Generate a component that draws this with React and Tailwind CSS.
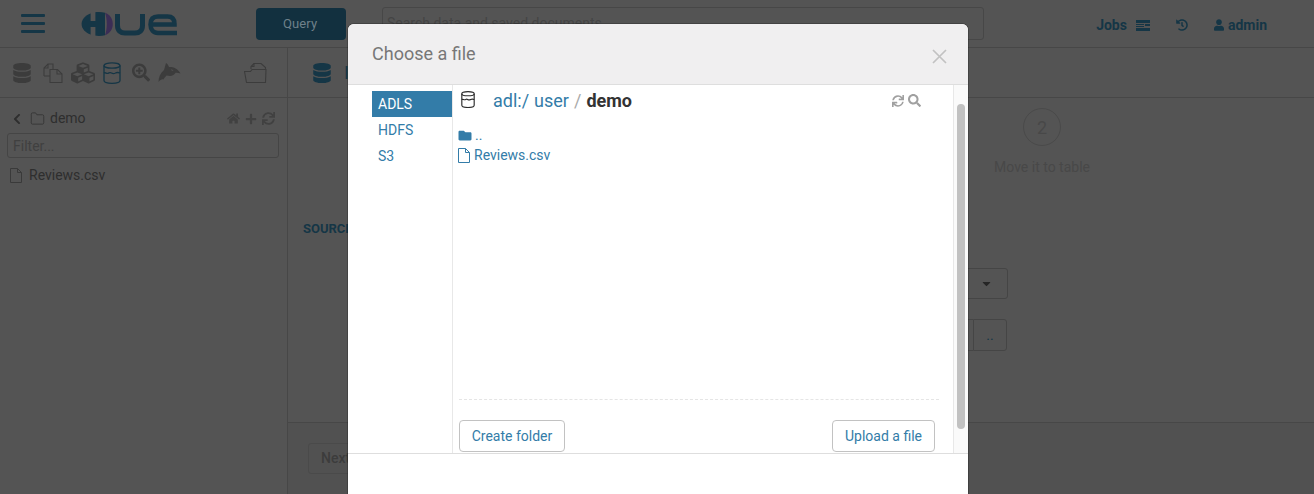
import React from "react";
import { FaChevronLeft, FaHome, FaPlus, FaSync, FaSearch, FaFolder, FaUser, FaHistory, FaCaretDown, FaDatabase, FaCubes, FaSearchPlus } from "react-icons/fa";
import { FiFolder } from "react-icons/fi";

const font = { fontFamily: "Roboto, sans-serif" };

function Bucket({ color, w = 18, h = 22, sw = 1.3 }) {
  return (
    <svg width={w} height={h} viewBox="0 0 18 22" fill="none" stroke={color} strokeWidth={sw}>
      <ellipse cx="9" cy="3.500" rx="8" ry="2.700" />
      <path d="M1 3.500v15c0 1.600 3.600 2.800 8 2.800s8-1.200 8-2.800v-15" />
      <path d="M1 11c1.500-1 2.500 .8 4 .3s2-1.300 3.500-.3 2.500 .8 4 0 3-.6 4.500 0" />
    </svg>
  );
}

function FileO({ color, className = "" }) {
  return (
    <svg className={className} width="12" height="15" viewBox="0 0 12 15" fill="none" stroke={color} strokeWidth="1">
      <path d="M.5 .5h7l4 4v10h-11z" />
      <path d="M7.500 .5v4h4" />
    </svg>
  );
}

function Files() {
  return (
    <svg width="20" height="20" viewBox="0 0 20 20" fill="none" stroke="#3c3c3c" strokeWidth="1.100">
      <path d="M1 13V5l4-4h5v5" />
      <path d="M5 1v4H1" />
      <path d="M1 13h6" />
      <path d="M7 6.500h7.500l4.500 4.500v8.500H7z" />
      <path d="M14 6.500V11h5" />
    </svg>
  );
}

function Orca() {
  return (
    <svg width="23" height="19" viewBox="0 0 23 19" fill="#3c3c3c">
      <path d="M.5 19c0-5 2-9 5.500-12L8 0c1.500 1 2.500 2.500 3 4 4.500-.2 8.500 1.500 11.500 6.500-2-.8-3.500-1-5-.8-1 1.800-3 3.300-5.500 3.300-1.300 0-2.300-.2-3.500-.5C7 14.500 6 15 5.500 16.500 4 15.800 2 17 .5 19z" />
      <path d="M13 6.500c1 0 2 .5 2.500 1.300-1 .2-2 0-2.500-1.300z" fill="#545454" />
    </svg>
  );
}

function FolderOpenDoc() {
  return (
    <svg width="23" height="20" viewBox="0 0 23 20" fill="none" stroke="#3c3c3c" strokeWidth="1.100">
      <path d="M2.500 19.500 .5 8.500h6l1.500-2h14l-.5 13z" />
      <path d="M7 6V3.500L10 .5h7l4.500 4v2" />
      <path d="M10 .5v3H7" />
    </svg>
  );
}

function JobsIcon() {
  return (
    <svg className="ml-[9px]" width="14" height="11" viewBox="0 0 14 11" fill="#153646">
      <path d="M0 0h14v3H0zM0 4h8v1H0zM9 4h5v2H9zM0 6h8v1H0zM0 8h14v3H0z" />
    </svg>
  );
}

function Hamburger() {
  return (
    <svg className="ml-[21px]" width="24" height="19" viewBox="0 0 24 19" fill="#153646">
      <rect y="0" width="24" height="3" rx="1" />
      <rect y="8" width="24" height="3" rx="1" />
      <rect y="16" width="24" height="3" rx="1" />
    </svg>
  );
}

function Logo() {
  return (
    <svg width="97" height="24" viewBox="0 0 97 24" fill="none">
      <g transform="scale(1.2 1)">
        <path d="M20 .8C16.500 -.2 12 -.2 8 1.500 3.500 3.500 .5 7.500 .5 12s3 8.500 7.500 10.500c4 1.700 8.500 1.700 12 .7z" fill="#153646" />
        <rect x="8" y="0" width="4" height="9" fill="#545454" />
        <rect x="8" y="15" width="4" height="9" fill="#545454" />
        <path d="M20 .8c4 1.500 6.500 6 6.500 11.200s-2.500 9.700-6.500 11.200c1-3 1.500-7 1.500-11.200S21 3.800 20 .8z" fill="#3b2d55" />
      </g>
      <path d="M36.500 2v11.500c0 5 3 7.500 7.500 7.500h10c4.500 0 7.500-2.500 7.500-7.500V2" stroke="#153646" strokeWidth="5" />
      <path d="M96 21H77c-4.500 0-7.500-3-7.500-8.500S72.500 4.500 77 4.500h9.500c4.500 0 7 2.500 7 7.500v.5H70" stroke="#153646" strokeWidth="4.500" />
    </svg>
  );
}

function Sidebar() {
  return (
    <aside className="w-[288px] shrink-0 border-r border-[#474747] flex flex-col">
      <div className="h-[50px] shrink-0 border-b border-[#474747] pl-[13px] pr-[20px] flex items-center">
        <FaDatabase className="w-[18px] h-[20px] text-[#3c3c3c]" />
        <span className="ml-[12px]"><Files /></span>
        <FaCubes className="w-[24px] h-[24px] ml-[8px] text-[#3c3c3c]" />
        <span className="ml-[8px]"><Bucket color="#153646" /></span>
        <FaSearchPlus className="w-[18px] h-[19px] ml-[11px] text-[#3c3c3c]" />
        <span className="ml-[8px]"><Orca /></span>
        <span className="ml-auto"><FolderOpenDoc /></span>
      </div>
      <div className="pl-[7px] pr-[8px] pt-[9px]">
        <div className="h-[23px] flex items-center pl-[5px] text-[#2e2e2e]">
          <FaChevronLeft className="w-[10px] h-[12px]" />
          <FiFolder className="w-[15px] h-[15px] ml-[8px] text-[#333]" strokeWidth={1.300} />
          <span className="ml-[5px] text-[14px]">demo</span>
          <span className="ml-auto flex items-center gap-[5px] pr-[4px] text-[#414141]">
            <FaHome className="w-[13px] h-[13px]" />
            <FaPlus className="w-[12px] h-[12px]" />
            <FaSync className="w-[13px] h-[13px]" />
          </span>
        </div>
        <div className="mt-[3px] h-[25px] border border-[#454545] rounded-[3px] pl-[5px] pt-[1px] flex items-center text-[14px] text-[#404040]">Filter...</div>
        <div className="mt-[7px] pl-[3px] h-[20px] flex items-center text-[14px] text-[#2e2e2e]">
          <FileO color="#3a3a3a" />
          <span className="ml-[7px]">Reviews.csv</span>
        </div>
      </div>
    </aside>
  );
}

function Main() {
  return (
    <main className="flex-1 min-w-0 flex flex-col">
      <div className="h-[50px] shrink-0 border-b border-[#474747] pl-[25px] flex items-center">
        <FaDatabase className="w-[18px] h-[20px] text-[#153646]" />
        <span className="ml-[13px] text-[18px] text-[#153646]">Importer</span>
      </div>
      <div className="h-[324px] shrink-0 flex flex-col">
        <div className="flex justify-end pr-[204px] pt-[10px]">
          <div className="w-[136px] flex flex-col items-center">
            <div className="w-[38px] h-[38px] rounded-full border border-[#4a4a4a] flex items-center justify-center text-[18px] text-[#484848]">2</div>
            <div className="mt-[12px] text-[14px] leading-[18px] text-[#484848]">Move it to table</div>
          </div>
        </div>
        <div className="pl-[15px] mt-[44px] text-[13px] leading-[18px] font-bold text-[#153646]">SOURCE</div>
        <div className="flex justify-end pr-[306px] mt-[30px]">
          <div className="w-[50px] h-[31px] border border-[#454545] rounded-r-[3px] flex items-center justify-end pr-[14px] text-[#262626]">
            <FaCaretDown className="w-[13px] h-[13px]" />
          </div>
        </div>
        <div className="flex justify-end pr-[307px] mt-[20px]">
          <div className="w-[10px] h-[32px] border-y border-[#454545]" />
          <div className="w-[34px] h-[32px] border border-[#454545] rounded-r-[3px] flex items-center justify-center text-[14px] text-[#153646]">..</div>
        </div>
      </div>
      <div className="flex-1 border-t border-[#474747] bg-[#515151] pl-[20px] pt-[20px]">
        <div className="w-[60px] h-[31px] border border-[#4a4a4a] rounded-[3px] pl-[12px] flex items-center text-[14px] font-medium text-[#3c3c3c]">Next</div>
      </div>
    </main>
  );
}

function Modal() {
  return (
    <div className="absolute left-[348px] top-[24px] w-[620px] h-[470px] bg-white rounded-t-[6px] flex flex-col overflow-hidden shadow-[0_0_0_1px_rgba(0,0,0,0.2)]">
      <div className="h-[61px] shrink-0 bg-[#f0eff0] border-b border-[#dedede] pl-[24px] pr-[21px] pb-[2px] flex items-center justify-between">
        <span className="text-[18px] text-[#777]">Choose a file</span>
        <svg className="mt-[6px]" width="15" height="15" viewBox="0 0 15 15" stroke="#c2c2c2" strokeWidth="1.700"><path d="M1 1l13 13M14 1L1 14" /></svg>
      </div>
      <div className="h-[368px] shrink-0 flex">
        <div className="w-[105px] shrink-0 pl-[24px] pt-[6px] border-r border-[#e8e8e8] text-[14px] text-[#337ca8]">
          <div className="h-[26px] pl-[6px] flex items-center bg-[#337ca8] text-white">ADLS</div>
          <div className="h-[26px] pl-[6px] flex items-center">HDFS</div>
          <div className="h-[26px] pl-[6px] flex items-center">S3</div>
        </div>
        <div className="w-[500px] shrink-0 flex flex-col pl-[6px] pr-[14px]">
          <div className="h-[31px] shrink-0 flex items-center text-[18px]">
            <span className="ml-[2px] -mt-[3px]"><Bucket color="#2b2b2b" w={14} h={17} sw={1.500} /></span>
            <span className="ml-[18px] text-[#337ca8]">adl:/</span>
            <span className="ml-[5px] text-[#337ca8]">user</span>
            <span className="ml-[5px] text-[#aaa]">/</span>
            <span className="ml-[5px] font-bold text-[#333]">demo</span>
            <span className="ml-auto pr-[18px] flex items-center gap-[4px] text-[#a0a0a0]">
              <FaSync className="w-[12px] h-[12px]" />
              <FaSearch className="w-[13px] h-[13px]" />
            </span>
          </div>
          <div className="mt-[9px] h-[20px] flex items-center text-[#337ca8] text-[14px]">
            <FaFolder className="w-[14px] h-[13px] -ml-[1px]" />
            <span className="ml-[3px]">..</span>
          </div>
          <div className="h-[21px] flex items-center text-[#337ca8] text-[14px]">
            <FileO color="#337ca8" className="-ml-[1px]" />
            <span className="ml-[4px]">Reviews.csv</span>
          </div>
          <div className="flex-1" />
          <div className="border-t border-dashed border-[#e5e5e5] h-[54px] shrink-0 flex items-end justify-between pr-[4px] pb-[1px]">
            <div className="h-[32px] w-[106px] border border-[#c2c2c2] rounded-[4px] flex items-center justify-center text-[14px] text-[#337ca8]">Create folder</div>
            <div className="h-[32px] px-[12px] border border-[#c2c2c2] rounded-[4px] flex items-center text-[14px] text-[#337ca8]">Upload a file</div>
          </div>
        </div>
        <div className="flex-1 bg-[#fafafa] border-l border-[#e8e8e8] pl-[3px] pt-[19px]">
          <div className="w-[8px] h-[325px] bg-[#c1c1c1] rounded-[4px]" />
        </div>
      </div>
      <div className="flex-1 border-t border-[#dedede] bg-white" />
    </div>
  );
}

export default function App() {
  return (
    <div className="relative w-[1314px] h-[494px] overflow-hidden bg-[#545454] flex flex-col" style={font}>
      <header className="h-[48px] shrink-0 border-b border-[#474747] flex items-center">
        <Hamburger />
        <span className="ml-[36px] flex"><Logo /></span>
        <div className="ml-[78px] w-[90px] h-[32px] bg-[#12303f] rounded-[4px] pl-[27px] flex items-center text-[13px] tracking-[0.1px] text-[#6f808a]">Query</div>
        <div className="ml-[36px] w-[602px] h-[33px] border border-[#474747] rounded-[3px] pl-[4px] flex items-center text-[14px] text-[#444]">Search data and saved documents...</div>
        <div className="ml-auto pr-[47px] pt-[3px] flex items-center text-[14px] font-bold text-[#153646]">
          <span>Jobs</span>
          <JobsIcon />
          <FaHistory className="ml-[26px] w-[12px] h-[12px]" />
          <FaUser className="ml-[26px] w-[10px] h-[12px]" />
          <span className="ml-[4px]">admin</span>
        </div>
      </header>
      <div className="flex-1 min-h-0 flex">
        <Sidebar />
        <Main />
      </div>
      <Modal />
    </div>
  );
}
